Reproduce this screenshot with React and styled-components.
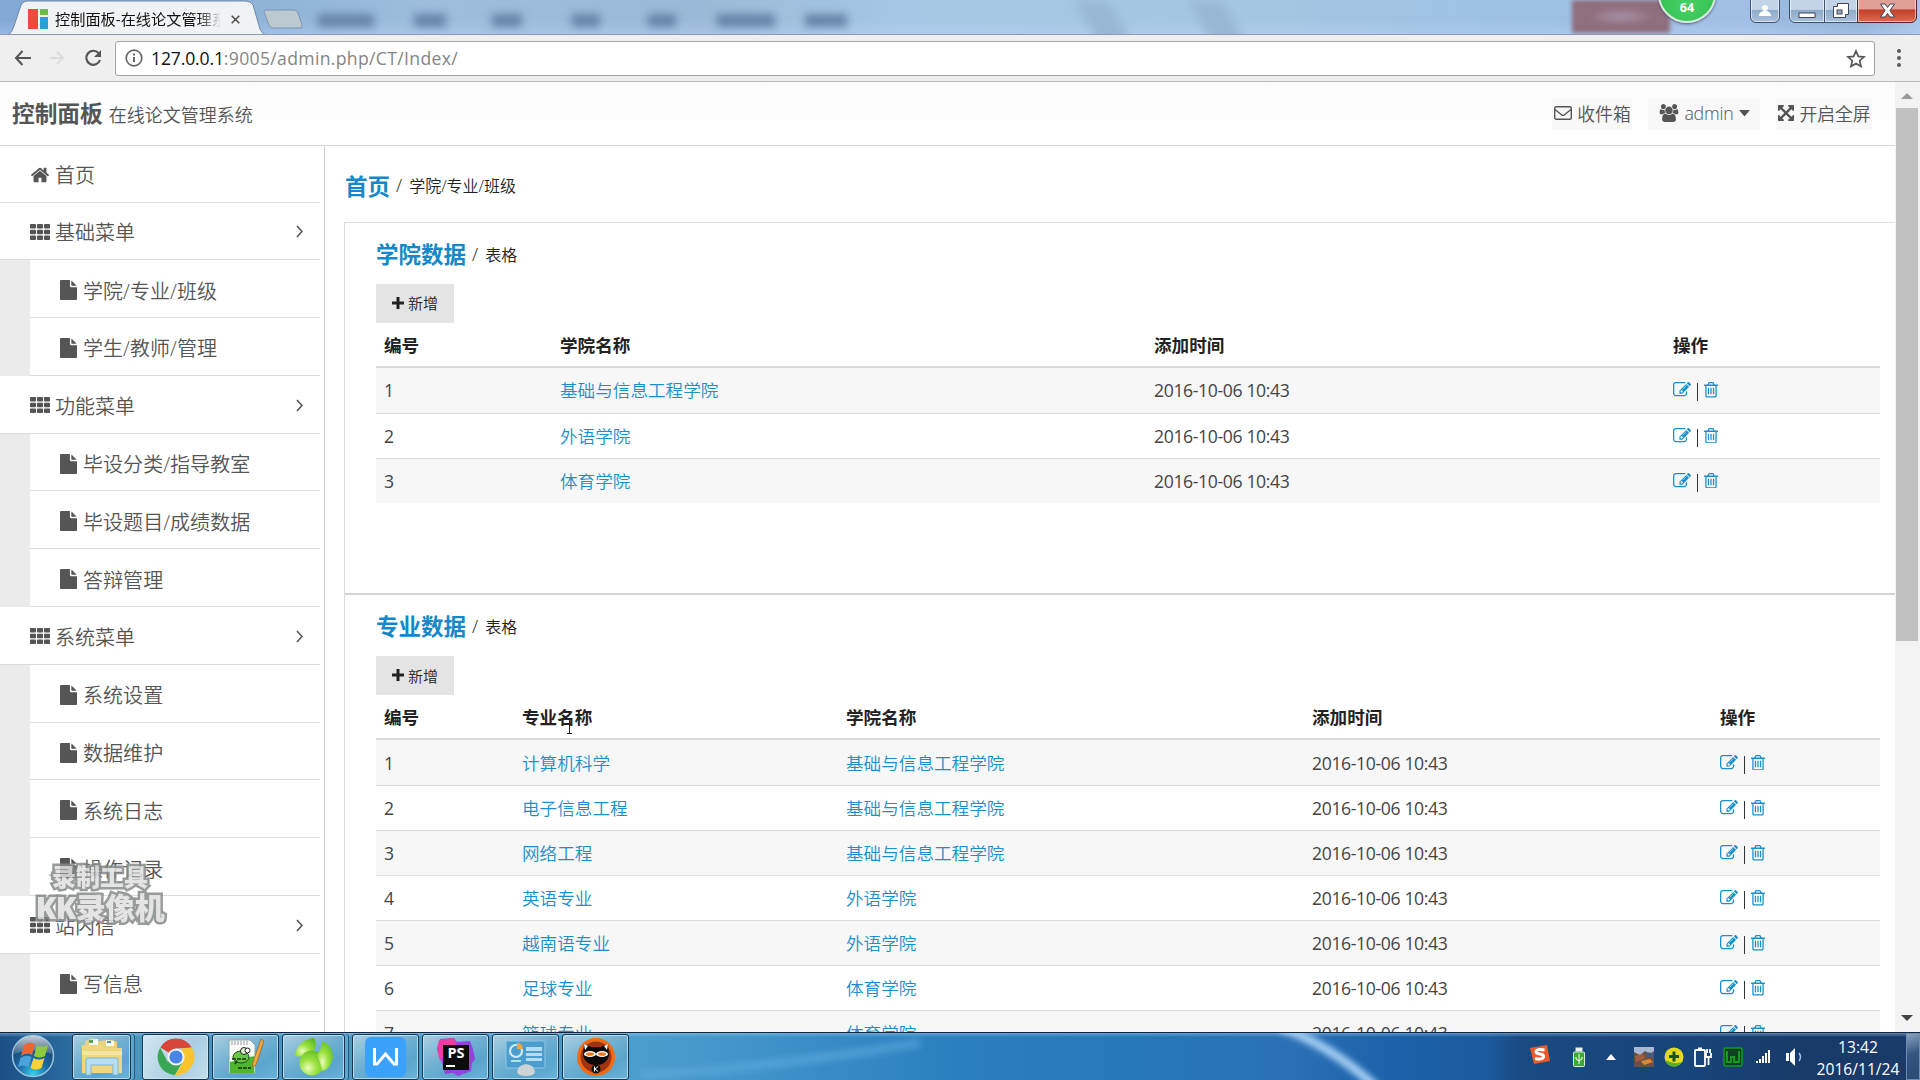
import React from "react";
import styled, { createGlobalStyle, css } from "styled-components";

const Global = createGlobalStyle`
  * { box-sizing: border-box; }
  body { margin: 0; background: #fff; overflow: hidden;
    font-family: "Open Sans", "Noto Sans CJK SC", sans-serif; color: #333; }
`;

const Screen = styled.div`
  width: 1920px; height: 1080px; display: flex; flex-direction: column;
  position: relative; overflow: hidden;
`;

/* ---------- browser chrome ---------- */
const TitleBar = styled.div`
  height: 35px; display: flex; align-items: flex-start; position: relative; flex: none;
  background: linear-gradient(180deg, transparent 60%, rgba(190,215,250,.35)),
    linear-gradient(90deg, #82a8d4 0, #91b4d8 280px, #9dbddb 420px, #9ab9d6 700px, #a6c8e4 900px,
      #a5c6e1 1280px, #9dc0e4 1560px, #a2bfe5 1740px, #8fb0d4 1860px, #a9c4e6 1920px);
  border-bottom: 1px solid #8a98b4; overflow: hidden;
`;
const TabShape = styled.svg`display: block; flex: none;`;
const TabContent = styled.div`
  position: absolute; left: 28px; top: 8px; height: 22px; width: 220px; display: flex; align-items: center;
`;
const TabTitle = styled.div`
  width: 166px; margin-left: 7px; font-size: 15.2px; white-space: nowrap; overflow: hidden; color: #111;
  line-height: 22px; -webkit-mask-image: linear-gradient(90deg, #000 86%, transparent);
`;
const Blurred = styled.div`
  display: flex; align-items: center; height: 35px; padding-top: 5px; filter: blur(4px);
`;
const Blob = styled.span`
  width: ${(p) => p.$w}px; height: 13px; margin-left: ${(p) => p.$gap}px; background: #6683a8; flex: none;
`;
const Streak = styled.div`
  width: 34px; height: 46px; margin-left: ${(p) => p.$gap}px; flex: none; transform: skewX(28deg);
  background: #97b7d2; filter: blur(6px);
`;
const RedHaze = styled.div`
  position: absolute; left: 1572px; top: 0; width: 98px; height: 33px; filter: blur(2px);
  background: radial-gradient(ellipse 34px 9px at 50% 50%, #a792a5, #8f6e7d);
`;
const Badge = styled.div`
  position: absolute; left: 1658px; top: -35px; width: 58px; height: 58px; border-radius: 50%;
  background: radial-gradient(circle at 50% 70%, #45d063, #2fb84c); border: 2px solid #d7efda;
  color: #fff; font-weight: 700; font-size: 12.5px; line-height: 16px; text-align: center; padding-top: 33px;
  box-shadow: 0 1px 3px #557;
`;
const WindowButtons = styled.div`
  position: absolute; left: 1750px; top: -2px; display: flex; height: 25px;
`;
const glass = css`
  border: 1px solid #39506f; background: linear-gradient(180deg, #c3d4e8 0 45%, #8eabc8 50%, #a9c1dc);
  box-shadow: inset 0 0 0 1px rgba(255,255,255,.6);
  display: flex; align-items: center; justify-content: center;
`;
const UserButton = styled.div`${glass} width: 30px; border-radius: 0 0 6px 6px; margin-right: 9px;`;
const WinButton = styled.div`
  ${glass} width: ${(p) => p.$w}px; border-radius: ${(p) => p.$radius || 0};
  margin-right: ${(p) => (p.$last ? 0 : -1)}px;
  ${(p) => p.$red && "background: linear-gradient(180deg, #e0a096 0 42%, #c3402c 48%, #dd6a4a); border-color:#52202a;"}
`;
const Toolbar = styled.div`
  height: 47px; flex: none; background: #efeff0; border-bottom: 1px solid #bababa;
  display: flex; align-items: center; padding: 0 16px 0 14px;
`;
const NavIcons = styled.div`display: flex; align-items: center; gap: 17px; width: 101px; flex: none;`;
const AddressBar = styled.div`
  flex: none; width: 1760px; height: 35px; border: 1px solid #a2a3a8; border-radius: 3px; background: #fff;
  display: flex; align-items: center; padding: 0 8px 0 9px; font-size: 17.6px; color: #858585;
  letter-spacing: -0.16px;
`;
const Host = styled.span`color: #111; margin-left: 8px;`;
const Url = styled.span`flex: 1; letter-spacing: 0.33px;`;
const MenuDots = styled.div`
  display: flex; flex-direction: column; gap: 3px; margin-left: 22px;
  i { width: 4px; height: 4px; border-radius: 50%; background: #5a5a5a; }
`;

/* ---------- page ---------- */
const Viewport = styled.div`flex: 1; min-height: 0; display: flex; overflow: hidden; background: #fff;`;
const Page = styled.div`width: 1895px; display: flex; flex-direction: column; flex: none;`;
const PageHeader = styled.div`
  height: 64px; flex: none; border-bottom: 1px solid #d9d9d9;
  background: linear-gradient(180deg, #fbfbfb 0, #fdfdfd 25px, #fff 45px);
  display: flex; align-items: center; padding: 0 23px 0 12px; color: #555;
`;
const Brand = styled.div`font-size: 22.7px; font-weight: 700; line-height: 30px; color: #555;`;
const BrandSub = styled.div`font-size: 18px; line-height: 30px; margin-left: 6px; flex: 1; padding-top: 2px; font-weight: 350;`;
const TopLink = styled.div`
  height: 32px; width: ${(p) => p.$w}px; margin-left: ${(p) => p.$gap}px; background: #f8f8f8;
  display: flex; align-items: center; justify-content: center; gap: 5px; font-size: 17.8px; font-weight: 350;
  letter-spacing: ${(p) => p.$ls || 0}px; white-space: nowrap; padding-left: 1px; padding-bottom: 1px;
`;
const Columns = styled.div`flex: 1; display: flex; min-height: 0;`;
const Sidebar = styled.div`width: 325px; border-right: 1px solid #cfcfcf; flex: none; padding-right: 4px;`;
const SideItem = styled.div`
  height: ${(p) => p.$h || 57.8}px; border-bottom: 1.5px solid #dcdcdc; display: flex; align-items: center;
  padding: 2px 17px 0 30px; font-size: 20px; font-weight: 350; color: #555; gap: 5px;
  span { flex: 1; }
`;
const SubGroup = styled.div`background: #ebebeb; padding-left: 30px;`;
const SubItem = styled(SideItem)`background: #fff; padding-left: 30px; gap: 6px; padding-top: 3px; letter-spacing: .05px;`;
const Main = styled.div`flex: 1; padding-left: 19px;`;
const Crumbs = styled.div`
  height: 76px; display: flex; align-items: center; padding: 2px 0 0 1px; font-size: 16px; font-weight: 350; color: #222;
  white-space: pre;
`;
const Lead = styled.b`font-size: 22.5px; color: #1488c8; font-weight: 700;`;
const Slash = styled.i`font-style: normal; font-size: 18px; margin: 0 7px 0 6px;`;
const Card = styled.div`
  height: ${(p) => (p.$strong ? 440 : 371)}px; border-left: 1px solid #dedede; border-top: ${(p) => (p.$strong ? "2px solid #d4d4d4" : "1px solid #dedede")};
  padding: 10px 15px 0 31px;
`;
const CardTitle = styled.div`
  display: flex; align-items: center; height: 41px; font-size: 16px; font-weight: 350; color: #222;
`;
const AddButton = styled.div`
  width: 78px; height: 39px; margin-top: ${(p) => p.$mt || 9}px; background: #e4e4e4; display: flex; align-items: center;
  justify-content: center; gap: 4px; font-size: 15px; font-weight: 350; color: #222; padding-bottom: 1px;
`;
const Row = styled.div`
  display: grid; grid-template-columns: ${(p) => p.$cols}; height: 45px; align-items: center;
  font-size: 17.6px; color: #333; font-weight: 350; background: ${(p) => (p.$odd ? "#f7f7f7" : "#fff")};
  border-top: ${(p) => (p.$first ? 0 : 1)}px solid #dcdcdc;
  > * { padding-left: 8px; white-space: nowrap; }
`;
const HeadRow = styled(Row)`
  height: 45px; font-weight: 700; border-top: 0; border-bottom: 2px solid #dadada; color: #222; background: #fff;
`;
const Link = styled.span`color: #1a8fcb; padding-bottom: 1px;`;
const DateCell = styled.span`letter-spacing: -0.36px; font-weight: 400; color: #444;`;
const NumCell = styled.span`font-weight: 400; color: #444;`;
const Actions = styled.span`
  display: flex; align-items: center; gap: 6px; color: #1a8fcb;
  i { width: 1px; height: 18px; background: #333; margin-top: 4px; }
`;
const ScrollBar = styled.div`
  flex: 1; background: #f3f3f3; display: flex; flex-direction: column; align-items: center; padding: 11px 3px 11px 1px;
`;
const ArrowHead = styled.div`
  border: 6px solid transparent; border-top-width: 0; border-bottom: 6px solid #9a9a9a;
  ${(p) => p.$down && "border-top: 6px solid #444; border-bottom-width: 0;"}
`;
const Thumb = styled.div`width: 22px; height: 533px; margin: 9px 0 auto; background: #c1c1c1;`;

const Watermark = styled.div`
  position: absolute; left: 30px; top: 861px; width: 140px; display: flex; flex-direction: column; align-items: center;
  font-weight: 900; color: #e0e0e0; paint-order: stroke fill; -webkit-text-stroke: 5px #868b89;
  white-space: nowrap; opacity: .85;
`;
const MarkLine = styled.div`font-size: ${(p) => p.$s}px; line-height: ${(p) => p.$lh}px; letter-spacing: ${(p) => p.$ls || 0}px;`;
const Cursor = styled.svg`position: absolute; left: 564px; top: 718px;`;

/* ---------- taskbar ---------- */
const TaskBar = styled.div`
  height: 48px; flex: none; border-top: 1px solid #14263c; display: flex; align-items: center; position: relative; overflow: hidden;
  background: linear-gradient(180deg, rgba(160,205,240,.5) 0, transparent 4px, transparent),
   linear-gradient(90deg, #1c4f85 0, #2b6b9f 70px, #4a94bd 130px, #4b9dcb 640px, #3f93c9 760px, #2b80c0 940px,
     #2577b9 1150px, #2a70b6 1290px, #1b61a9 1400px, #1b5b9f 1485px, #1a4a82 1520px, #174479 1700px, #183a68 1800px, #1a3b69 1920px);
`;
const Sweep = styled.svg`position: absolute; left: 640px; top: 0;`;
const Start = styled.div`width: 72px; padding-left: 11px; display: flex; flex: none;`;
const TaskButton = styled.div`
  width: ${(p) => p.$w}px; height: 46px; margin-right: ${(p) => p.$gap || 4}px; flex: none; border-radius: 3px;
  border: 1px solid #173650; box-shadow: inset 0 0 0 1px rgba(220,240,250,.65)${(p) => (p.$stack ? ", 3px 0 0 #5ea7cc, 4px 0 0 #27577c" : "")};
  background: ${(p) => p.$active
    ? "linear-gradient(120deg, #d6e8f2, #a8cde2 60%, #c3dfec)"
    : "linear-gradient(150deg, #a9cfe2 0, #6fb0d2 45%, #5ba5cd 70%, #69b2d8)"};
  display: flex; align-items: center; justify-content: center; position: relative;
`;
const Apps = styled.div`display: flex; width: 1458px; flex: none; position: relative;`;
const Tray = styled.div`display: flex; align-items: center; position: relative; width: 282px; gap: 10px; flex: none; height: 30px; margin: 1px 0 0 72px;`;
const Clock = styled.div`
  color: #fff; font-size: 15.6px; line-height: 22px; text-align: center; width: 92px; flex: none; margin-top: 2px;
`;
const ShowDesktop = styled.div`
  width: 14px; height: 47px; margin-left: 2px; border: 1px solid #6f8db1; background: linear-gradient(160deg, #8ba3c0, #33557f 45%, #2a4a75);
`;

const ICONS = {
  home: ["0 0 1792 1792", "M1472 992v480q0 26-19 45t-45 19h-384v-384h-256v384h-384q-26 0-45-19t-19-45v-480q0-1 .5-3t.5-3l575-474 575 474q1 2 1 6zm223-69l-62 74q-8 9-21 11h-3q-13 0-21-7l-692-577-692 577q-12 8-24 7-13-2-21-11l-62-74q-8-10-7-23.5t11-21.5l719-599q32-26 76-26t76 26l244 204v-195q0-14 9-23t23-9h192q14 0 23 9t9 23v408l219 182q10 8 11 21.5t-7 23.5z"],
  file: ["128 0 1536 1792", "M1152 512v-472q22 14 36 28l408 408q14 14 28 36h-472zm-128 32q0 40 28 68t68 28h544v1056q0 40-28 68t-68 28h-1344q-40 0-68-28t-28-68v-1600q0-40 28-68t68-28h800v544z"],
  th: ["0 0 20 18", "M.8 0h4.4q.8 0 .8.8v3.4q0 .8-.8.8H.8Q0 5 0 4.200V.8Q0 0 .8 0zM7.800 0h4.4q.8 0 .8.8v3.4q0 .8-.8.8H7.800Q7 5 7 4.200V.8Q7 0 7.800 0zM14.800 0h4.400q.8 0 .8.8v3.400q0 .8-.8.8h-4.400q-.8 0-.8-.8V.8q0-.8.8-.8zM.8 6.500h4.400q.8 0 .8.8v3.400q0 .8-.8.8H.8q-.8 0-.8-.8V7.300q0-.8.8-.8zM7.800 6.500h4.400q.8 0 .8.8v3.400q0 .8-.8.8H7.800q-.8 0-.8-.8V7.300q0-.8.8-.8zM14.800 6.500h4.400q.8 0 .8.8v3.400q0 .8-.8.8h-4.400q-.8 0-.8-.8V7.300q0-.8.8-.8zM.8 13h4.400q.8 0 .8.8v3.400q0 .8-.8.8H.8q-.8 0-.8-.8v-3.400q0-.8.8-.8zM7.800 13h4.400q.8 0 .8.8v3.400q0 .8-.8.8H7.800q-.8 0-.8-.8v-3.400q0-.8.8-.8zM14.800 13h4.400q.8 0 .8.8v3.400q0 .8-.8.8h-4.400q-.8 0-.8-.8v-3.400q0-.8.8-.8z"],
  users: ["0 0 2048 1792", "M657 896q-162 5-265 128h-134q-82 0-138-40.5t-56-118.5q0-353 124-353 6 0 43.5 21t97.500 42.5 119 21.5q67 0 133-23-5 37-5 66 0 139 81 256zm1071 637q0 120-73 189.5t-194 69.500h-874q-121 0-194-69.500t-73-189.500q0-53 3.500-103.500t14-109 26.500-108.500 43-97.500 62-81 85.500-53.500 111.500-20q10 0 43 21.500t73 48 107 48 135 21.500 135-21.500 107-48 73-48 43-21.500q61 0 111.500 20t85.500 53.500 62 81 43 97.500 26.500 108.500 14 109 3.500 103.500zm-1024-1277q0 106-75 181t-181 75-181-75-75-181 75-181 181-75 181 75 75 181zm704 384q0 159-112.500 271.500t-271.500 112.500-271.500-112.500-112.500-271.500 112.500-271.500 271.500-112.500 271.500 112.500 112.500 271.500zm576 225q0 78-56 118.500t-138 40.500h-134q-103-123-265-128 81-117 81-256 0-29-5-66 66 23 133 23 59 0 119-21.500t97.500-42.500 43.500-21q124 0 124 353zm-128-609q0 106-75 181t-181 75-181-75-75-181 75-181 181-75 181 75 75 181z"],
  expand: ["128 128 1536 1536", "M1411 541l-355 355 355 355 144-144q29-31 70-14 39 17 39 59v448q0 26-19 45t-45 19h-448q-42 0-59-40-17-39 14-69l144-144-355-355-355 355 144 144q31 30 14 69-17 40-59 40h-448q-26 0-45-19t-19-45v-448q0-42 40-59 39-17 69 14l144 144 355-355-355-355-144 144q-19 19-45 19-12 0-24-5-40-17-40-59v-448q0-26 19-45t45-19h448q42 0 59 40 17 39-14 69l-144 144 355 355 355-355-144-144q-31-30-14-69 17-40 59-40h448q26 0 45 19t19 45v448q0 42-39 59-13 5-25 5-26 0-45-19z"],
  trash: ["192 128 1408 1536", "M704 736v576q0 14-9 23t-23 9h-64q-14 0-23-9t-9-23v-576q0-14 9-23t23-9h64q14 0 23 9t9 23zm256 0v576q0 14-9 23t-23 9h-64q-14 0-23-9t-9-23v-576q0-14 9-23t23-9h64q14 0 23 9t9 23zm256 0v576q0 14-9 23t-23 9h-64q-14 0-23-9t-9-23v-576q0-14 9-23t23-9h64q14 0 23 9t9 23zm128 724v-948h-896v948q0 22 7 40.5t14.5 27 10.5 8.5h832q3 0 10.5-8.5t14.5-27 7-40.5zm-672-1076h448l-48-117q-7-9-17-11h-317q-10 2-17 11zm928 32v64q0 14-9 23t-23 9h-96v948q0 83-47 143.5t-113 60.5h-832q-66 0-113-58.5t-47-141.5v-952h-96q-14 0-23-9t-9-23v-64q0-14 9-23t23-9h309l70-167q15-37 54-63t79-26h320q40 0 79 26t54 63l70 167h309q14 0 23 9t9 23z"],
  edit: ["0 128 1792 1536", "M888 1184l116-116-152-152-116 116v56h96v96h56zm440-720q-16-16-33 1l-350 350q-17 17-1 33t33-1l350-350q17-17 1-33zm80 594v190q0 119-84.5 203.5t-203.5 84.5h-832q-119 0-203.5-84.5t-84.5-203.5v-832q0-119 84.5-203.5t203.5-84.5h832q63 0 117 25 15 7 18 23 3 17-9 29l-49 49q-14 14-32 8-23-6-45-6h-832q-66 0-113 47t-47 113v832q0 66 47 113t113 47h832q66 0 113-47t47-113v-126q0-13 9-22l64-64q15-15 35-7t20 29zm-96-738l288 288-672 672h-288v-288zm444 132l-92 92-288-288 92-92q28-28 68-28t68 28l152 152q28 28 28 68t-28 68z"],
  plus: ["0 0 12 12", "M4.500 0h3v4.500H12v3H7.500V12h-3V7.500H0v-3h4.500z"],
};
const Glyph = styled.svg`flex: none;`;
const Icon = ({ n, w, h }) => (
  <Glyph width={w} height={h} viewBox={ICONS[n][0]} fill="currentColor" preserveAspectRatio="none">
    <path d={ICONS[n][1]} />
  </Glyph>
);
const Chevron = () => (
  <svg width="7" height="13" viewBox="0 0 7 13" fill="none" stroke="#555" strokeWidth="1.6"><path d="M1 1l5 5.500-5 5.500" /></svg>
);

const MENU = [
  ["基础菜单", ["学院/专业/班级", "学生/教师/管理"]],
  ["功能菜单", ["毕设分类/指导教室", "毕设题目/成绩数据", "答辩管理"]],
  ["系统菜单", ["系统设置", "数据维护", "系统日志", "操作记录"]],
  ["站内信", ["写信息", ""]],
];
const T = "2016-10-06 10:43";
const A = "基础与信息工程学院";
const COLLEGES = [A, "外语学院", "体育学院"].map((x) => [x]);
const MAJORS = [["计算机科学", A], ["电子信息工程", A], ["网络工程", A], ["英语专业", "外语学院"],
  ["越南语专业", "外语学院"], ["足球专业", "体育学院"], ["篮球专业", "体育学院"]];

const DataCard = ({ title, heads, rows, cols, strong }) => (
  <Card $strong={strong}>
    <CardTitle><Lead>{title}</Lead><Slash>/</Slash>表格</CardTitle>
    <AddButton $mt={strong ? 10 : 9.5}><Icon n="plus" w={12} h={12} />新增</AddButton>
    <HeadRow $cols={cols}>{heads.map((h) => <span key={h}>{h}</span>)}</HeadRow>
    {rows.map((r, i) => (
      <Row key={i} $cols={cols} $odd={i % 2 === 0} $first={i === 0}>
        <NumCell>{i + 1}</NumCell>
        {r.map((c) => <Link key={c}>{c}</Link>)}
        <DateCell>{T}</DateCell>
        <Actions><Icon n="edit" w={18} h={15.5} /><i /><Icon n="trash" w={14} h={15.5} /></Actions>
      </Row>
    ))}
  </Card>
);

const StartOrb = () => (
  <svg width="44" height="44" viewBox="0 0 44 44">
    <defs><radialGradient id="orb" cx=".5" cy=".95" r=".9"><stop offset="0" stopColor="#3cd0ef" /><stop offset=".4" stopColor="#1c6ca6" /><stop offset="1" stopColor="#16385f" /></radialGradient>
      <linearGradient id="gl" x2="0" y2="1"><stop offset="0" stopColor="#fff" stopOpacity=".75" /><stop offset="1" stopColor="#fff" stopOpacity=".15" /></linearGradient></defs>
    <circle cx="22" cy="22" r="20.500" fill="url(#orb)" stroke="#9cc6dd" strokeWidth="1.500" />
    <path d="M3 20a19 18 0 0138 0q-19-7-38 0z" fill="url(#gl)" />
    <path d="M13 11q5-4 11-1l-3 11q-5-3-11 1z" fill="#e8663a" />
    <path d="M26 11q5 3 11 0l-3 11q-5 3-11 0z" fill="#92c83e" />
    <path d="M9.500 24q5-4 11-1l-3 10q-5-3-10.500 0z" fill="#4ba3dc" />
    <path d="M22.500 24q5 3 11 0l-3 10q-5 3-11 0z" fill="#f8cf3d" />
  </svg>
);
const Explorer = () => (
  <svg width="42" height="40" viewBox="0 0 42 40">
    <path d="M4 4l8-3 3 3 16-1 5 2v10H4z" fill="#e9d27c" /><path d="M8 3l9-1v6H8zM25 3l8 1v5h-8z" fill="#f6fbf2" />
    <path d="M8 3h4v3H8z" fill="#58a556" /><path d="M26 4h4v2h-4z" fill="#4f8fcd" />
    <path d="M1 8h20l3 3h17v25H1z" fill="#f0d67e" /><path d="M1 14h40v4H1z" fill="#f7e6a2" />
    <path d="M5 38V23q0-2 2-2h28q2 0 2 2v15h-5V28H10v10z" fill="#b6dff3" stroke="#7fb6d4" />
  </svg>
);
const ChromeIcon = () => (
  <svg width="38" height="38" viewBox="0 0 38 38">
    <path d="M19 19L3.400 9.500A18 18 0 0134.600 9.500L19 10.500z" fill="#d9453a" />
    <path d="M3.200 9.800A18 18 0 0018 37l7-12.500-14.500-1z" fill="#3aa757" />
    <path d="M34.800 9.800A18 18 0 0118 37l8.500-14L24 10.500z" fill="#f8c52f" />
    <circle cx="19" cy="19" r="8.600" fill="#f4f6f4" /><circle cx="19" cy="19" r="6.600" fill="#4a86e8" />
  </svg>
);
const NotepadIcon = () => (
  <svg width="40" height="38" viewBox="0 0 40 38">
    <path d="M3 2h21l5 5v28H3z" fill="#f7faf5" stroke="#8aa" /><path d="M4 24l24-6v17H4z" fill="#4fb62e" />
    <ellipse cx="15" cy="19" rx="8" ry="6" fill="#69c545" stroke="#214a14" /><circle cx="18" cy="13" r="3.500" fill="#d8f0cc" stroke="#222" /><circle cx="21.500" cy="12.500" r="2.500" fill="#fff" stroke="#222" />
    <path d="M6 21h15M12 30h13M9 26l3-5" stroke="#17340d" strokeWidth="1.600" strokeDasharray="4 1" />
    <path d="M6 3v4M9 3v4M12 3v4M15 3v4M18 3v4M21 3v4" stroke="#99a" />
    <path d="M35 1l3 2-8 24-4 2 1-5z" fill="#f0a63c" stroke="#94612a" strokeWidth=".7" />
  </svg>
);
const GreenIcon = () => (
  <svg width="42" height="40" viewBox="0 0 42 40">
    <defs><radialGradient id="gg" cx=".35" cy=".7" r=".85"><stop offset="0" stopColor="#effcc0" /><stop offset=".4" stopColor="#9be23f" /><stop offset="1" stopColor="#55b81c" /></radialGradient></defs>
    <path d="M2 19Q4 3 21 1q5 8-3 15-7 5-16 3z" fill="url(#gg)" /><circle cx="19" cy="26" r="12.500" fill="url(#gg)" />
    <path d="M29 4q11 4 11 17-4 13-11 13-2-10-5-16 5-6 5-14z" fill="url(#gg)" />
  </svg>
);
const WpsIcon = () => (
  <svg width="41" height="40" viewBox="0 0 41 40"><rect width="41" height="40" rx="6" fill="#3aa2fa" />
    <path d="M9.500 11v16h2.500l8.500-10 8.500 10h2.500V11" fill="none" stroke="#fff" strokeWidth="3" /></svg>
);
const Word = styled.span`
  position: absolute; left: 20px; top: 10px; width: 26px; height: 25px; background: #0c0c0e; color: #fff; font-weight: 700;
  font-size: 14.5px; line-height: 16px; text-align: center;
  &::after { content: ""; position: absolute; left: 3px; bottom: 3px; width: 9px; height: 2px; background: #fff; }
`;
const PsBack = () => (
  <svg width="40" height="40" viewBox="0 0 40 40"><path d="M4 2l14-1 3 4 13-1 3 8 2 10-3 4-1 8-13 5-5-3-8 1-3-12L1 12z" fill="#9243dd" /><path d="M3 3l14-2 4 5L4 24 1 12z" fill="#ea3ea5" /></svg>
);
const PanelIcon = () => (
  <svg width="42" height="42" viewBox="0 0 42 42"><rect x="1" y="5" width="39" height="27" rx="1" fill="#4b9dcd" stroke="#8dc8e6" />
    <circle cx="11" cy="15" r="6" fill="none" stroke="#cfeafa" strokeWidth="2.200" /><path d="M12 13V6.500a7 7 0 016 6.500z" fill="#f0a83c" />
    <path d="M21 11h16v4H21zM21 17h16v3H21zM21 22h16v3H21z" fill="#b5dcf2" /><path d="M6 25h10" stroke="#cfe" strokeWidth="1.500" />
    <path d="M12 36q1-7 9-8 8 1 9 8-1 4-9 4t-9-4z" fill="#cfd3d6" /></svg>
);
const CatIcon = () => (
  <svg width="40" height="40" viewBox="0 0 40 40"><circle cx="20" cy="20" r="19" fill="#f26a12" /><circle cx="20" cy="20" r="15.500" fill="#9e3412" />
    <path d="M8 7l7 3h10l7-3 1 12q-3 9-13 9T7 19z" fill="#0c0a0a" /><path d="M8 7l4 2-3 4zM32 7l-4 2 3 4z" fill="#fff" />
    <ellipse cx="14" cy="17" rx="6" ry="3" fill="#fff" /><ellipse cx="26" cy="17" rx="6" ry="3" fill="#fff" /><ellipse cx="14" cy="17" rx="4" ry="1.800" fill="#ef7a1c" /><ellipse cx="26" cy="17" rx="4" ry="1.800" fill="#ef7a1c" />
    <circle cx="20" cy="32" r="4.500" fill="#111" /><path d="M18.500 29.500v5M22 29.500l-3 2.500 3 2.500" stroke="#fff" fill="none" /></svg>
);
const TrayIcon = styled.svg`flex: none; margin-left: ${(p) => p.$ml || 0}px; margin-top: ${(p) => p.$mt || 0}px;`;

export default function App() {
  return (
    <Screen>
      <Global />
      <TitleBar>
        <TabShape width="306" height="35">
          <path d="M8 35Q12 33 14 26L21 5Q23 1 27 1H246Q251 1 253 5L260 29Q262 34 266 35z" fill="#f1f2f4" stroke="#6f86a8" />
          <path d="M264 12q0-2 3-2h27q3 0 4 3l4 12q1 3-2 3h-27q-3 0-4-3z" fill="#bcc9ce" stroke="#7d95b5" />
        </TabShape>
        <TabContent>
          <svg width="20" height="20"><path d="M0 0h10v20H0z" fill="#ee4b3c" /><path d="M12 0h8v6h-8z" fill="#6dbb45" /><path d="M12 8h8v12h-8z" fill="#2c9fd9" /></svg>
          <TabTitle>控制面板-在线论文管理系统</TabTitle>
          <TrayIcon $ml={10} width="9" height="9"><path d="M.7.7l7.600 7.600M8.300.7L.7 8.300" stroke="#444" strokeWidth="1.400" /></TrayIcon>
        </TabContent>
        <Blurred>
          <Blob $w={56} $gap={12} /><Blob $w={32} $gap={40} /><Blob $w={30} $gap={46} /><Blob $w={28} $gap={50} />
          <Blob $w={28} $gap={48} /><Blob $w={58} $gap={41} /><Blob $w={42} $gap={30} />
        </Blurred>
        <Streak $gap={240} /><Streak $gap={80} />
        <RedHaze />
        <Badge>64</Badge>
        <WindowButtons>
          <UserButton><svg width="12" height="13"><circle cx="6" cy="4" r="3" fill="#fff" /><path d="M0 12q0-5 6-5t6 5z" fill="#fff" /></svg></UserButton>
          <WinButton $w={36} $radius="0 0 0 6px"><svg width="18" height="14"><rect x="1" y="9" width="16" height="4.500" fill="#fff" stroke="#445" /></svg></WinButton>
          <WinButton $w={34}><svg width="18" height="17"><path d="M5.500 1.500h11v11h-3v3h-12v-11h4z" fill="#fff" stroke="#445" /><rect x="5" y="8" width="5" height="4" fill="#9ab" stroke="#445" /></svg></WinButton>
          <WinButton $w={60} $red $last $radius="0 0 6px 0"><svg width="17" height="15"><path d="M1.500 1H6l2.500 3.500L11 1h4.500l-4.500 6.500 4.500 6.500H11l-2.500-3.500L6 14H1.500L6 7.500z" fill="#fff" stroke="#445" /></svg></WinButton>
        </WindowButtons>
      </TitleBar>
      <Toolbar>
        <NavIcons>
          <svg width="18" height="16" fill="none" stroke="#555" strokeWidth="2"><path d="M17 8H2M8.500 1L2 8l6.500 7" /></svg>
          <svg width="18" height="16" fill="none" stroke="#dcdcdc" strokeWidth="2"><path d="M1 8h12M8 2l6 6-6 6" /></svg>
          <svg width="18" height="18" fill="none" stroke="#555" strokeWidth="2.200"><path d="M14.500 4A7 7 0 1016 11" /><path d="M17 1v7h-7z" fill="#555" stroke="none" /></svg>
        </NavIcons>
        <AddressBar>
          <svg width="18" height="18" fill="none" stroke="#666" strokeWidth="1.700"><circle cx="9" cy="9" r="7.800" /><path d="M9 8v5M9 4.500v2" strokeWidth="2" /></svg>
          <Host>127.0.0.1</Host><Url>:9005/admin.php/CT/Index/</Url>
          <svg width="20" height="19" viewBox="0 0 20 19" fill="none" stroke="#555" strokeWidth="1.700"><path d="M10 2l2.300 5.400 5.700.5-4.300 3.800 1.300 5.700-5-3-5 3 1.300-5.700L2 7.900l5.700-.5z" /></svg>
        </AddressBar>
        <MenuDots><i /><i /><i /></MenuDots>
      </Toolbar>
      <Viewport>
        <Page>
          <PageHeader>
            <Brand>控制面板</Brand><BrandSub>在线论文管理系统</BrandSub>
            <TopLink $w={80} $gap={0}>
              <svg width="18" height="14" fill="none" stroke="#555" strokeWidth="1.400"><rect x=".7" y=".7" width="16.600" height="12.600" rx="1.500" /><path d="M1 3.500l6.500 5.300q1.500 1 3 0L17 3.500" /></svg>
              收件箱
            </TopLink>
            <TopLink $w={112} $gap={16} $ls={-0.2}>
              <Icon n="users" w={20} h={18} />admin
              <svg width="11" height="7"><path d="M0 0h11L5.500 6.500z" fill="#555" /></svg>
            </TopLink>
            <TopLink $w={96} $gap={16}><Icon n="expand" w={16} h={16} />开启全屏</TopLink>
          </PageHeader>
          <Columns>
            <Sidebar>
              <SideItem $h={56.5}><Icon n="home" w={20} h={20} /><span>首页</span></SideItem>
              {MENU.map(([name, kids]) => (
                <React.Fragment key={name}>
                  <SideItem><Icon n="th" w={20} h={16} /><span>{name}</span><Chevron /></SideItem>
                  <SubGroup>{kids.map((k) => <SubItem key={k}><Icon n="file" w={17} h={20} />{k}</SubItem>)}</SubGroup>
                </React.Fragment>
              ))}
            </Sidebar>
            <Main>
              <Crumbs><Lead>首页</Lead><Slash>/</Slash>学院/专业/班级</Crumbs>
              <DataCard title="学院数据" heads={["编号", "学院名称", "添加时间", "操作"]} rows={COLLEGES} cols="176px 594px 519px 1fr" />
              <DataCard strong title="专业数据" heads={["编号", "专业名称", "学院名称", "添加时间", "操作"]} rows={MAJORS} cols="138px 324px 466px 408px 1fr" />
            </Main>
          </Columns>
        </Page>
        <ScrollBar><ArrowHead /><Thumb /><ArrowHead $down /></ScrollBar>
      </Viewport>
      <Watermark><MarkLine $s={24} $lh={32}>录制工具</MarkLine><MarkLine $s={30} $lh={30} $ls={-0.5}>KK录像机</MarkLine></Watermark>
      <Cursor width="11" height="17" fill="none" stroke="#222"><path d="M3 15.500h5M5.500 1v14" /></Cursor>
      <TaskBar>
        <Sweep width="880" height="48">
          <defs><filter id="soft" x="-20%" y="-50%" width="140%" height="200%"><feGaussianBlur stdDeviation="3" /></filter></defs>
          <path d="M0 42Q120 36 280 10" stroke="#63b0e0" strokeWidth="9" fill="none" opacity=".5" filter="url(#soft)" />
          <path d="M640 -6Q690 12 736 54" stroke="#a6d0f6" strokeWidth="9" fill="none" filter="url(#soft)" />
        </Sweep>
        <Apps>
          <Start><StartOrb /></Start>
          <TaskButton $w={59} $gap={11} $stack><Explorer /></TaskButton>
          <TaskButton $w={67} $gap={3} $active><ChromeIcon /></TaskButton>
          <TaskButton $w={67} $gap={3}><NotepadIcon /></TaskButton>
          <TaskButton $w={63} $gap={7} $stack><GreenIcon /></TaskButton>
          <TaskButton $w={67} $gap={3}><WpsIcon /></TaskButton>
          <TaskButton $w={67} $gap={3}><PsBack /><Word>PS</Word></TaskButton>
          <TaskButton $w={67} $gap={3}><PanelIcon /></TaskButton>
          <TaskButton $w={67} $gap={0}><CatIcon /></TaskButton>
        </Apps>
        <Tray>
          <TrayIcon $mt={-5} width="20" height="20"><path d="M0 3l17-3 3 16-16 3z" fill="#ec5a29" /><path d="M14.500 5q-8-1.500-8.500 1.500 0 2 4 2.500 4 .5 3.500 3-1 3-8.500 1.500" fill="none" stroke="#fff" strokeWidth="3" /></TrayIcon>
          <TrayIcon $ml={13} width="12" height="20"><rect x="2.500" y=".5" width="7" height="4" fill="#eee" /><rect x=".5" y="5" width="11" height="14.500" rx="1" fill="#3aaa35" stroke="#d8edd5" /><path d="M6 7v10M3 10v2l3 2 3-2v-2" stroke="#fff" fill="none" /></TrayIcon>
          <TrayIcon $ml={11} width="10" height="6"><path d="M0 6h10L5 0z" fill="#fff" /></TrayIcon>
          <TrayIcon $ml={8} width="20" height="20"><rect width="20" height="20" fill="#6c5140" /><path d="M0 0h20v4l-4 3-5-3-5 4-6-3z" fill="#a8b7d6" /><path d="M1 9l8-2 2 4-9 4z" fill="#a2603a" /><path d="M7 14l9-2 3 3-9 3z" fill="#d88a35" /><path d="M12 5l7 1v5l-6-1z" fill="#455a8a" /></TrayIcon>
          <TrayIcon width="20" height="20"><circle cx="10" cy="10" r="9.500" fill="#e6d91c" /><path d="M1 13a9.500 9.500 0 0017 2q-8 3-17-2z" fill="#4fb02d" /><path d="M10 4.500v10M5 9.500h10" stroke="#16551d" strokeWidth="3" /></TrayIcon>
          <TrayIcon width="19" height="20" fill="none" stroke="#fff" strokeWidth="1.800"><rect x="1" y="3" width="10" height="16" rx="1" /><path d="M4 1.500h4M12 6v4h5V6M13 2v4M16 2v4M14.500 11v7" /></TrayIcon>
          <TrayIcon width="20" height="20"><rect x="1" y="1" width="18" height="18" rx="2" fill="#113f24" stroke="#119a1e" strokeWidth="1.500" /><path d="M4 4v11h4v-5h3v5h5V4" fill="none" stroke="#119a1e" strokeWidth="2" /></TrayIcon>
          <TrayIcon $ml={3} width="14" height="14" fill="#fff"><path d="M0 11h2v2H0zM3 9h2v4H3zM6 6h2v7H6zM9 3h2v10H9zM12 0h2v13h-2z" /></TrayIcon>
          <TrayIcon $ml={6} width="17" height="20"><path d="M0 6h3v8H0zM4 6l5-5v18l-5-5z" fill="#fff" /><path d="M13 6q3 4 0 8" stroke="#9fc0e6" strokeWidth="1.500" fill="none" /></TrayIcon>
        </Tray>
        <Clock>13:42<br />2016/11/24</Clock>
        <ShowDesktop />
      </TaskBar>
    </Screen>
  );
}
